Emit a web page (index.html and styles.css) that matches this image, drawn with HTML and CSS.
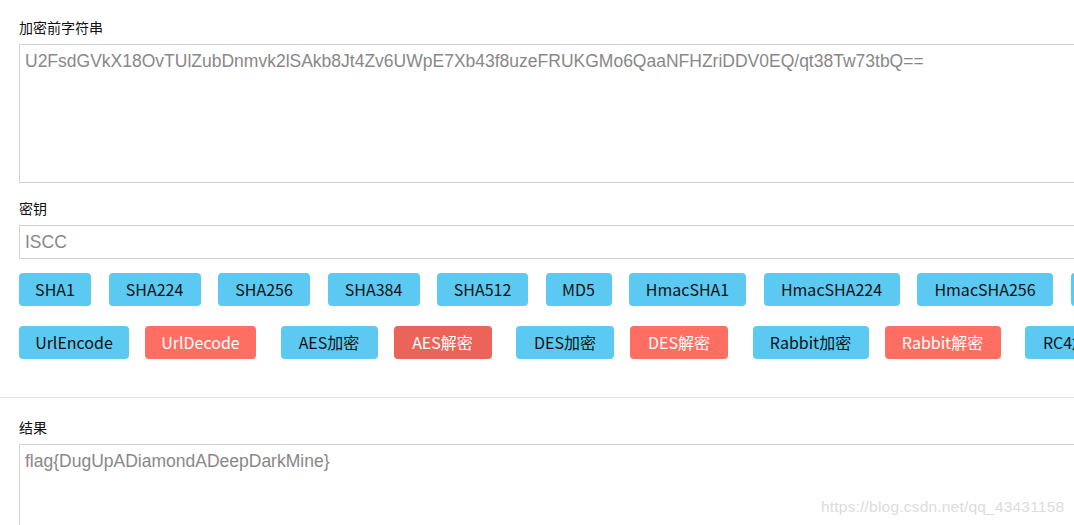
FILE: index.html
```html
<!DOCTYPE html>
<html lang="zh">
<head>
<meta charset="utf-8">
<title>加密解密</title>
<link rel="stylesheet" href="styles.css">
</head>
<body>
<div class="page">
  <section class="top">
    <label class="lbl">加密前字符串</label>
    <textarea class="area area-src">U2FsdGVkX18OvTUlZubDnmvk2lSAkb8Jt4Zv6UWpE7Xb43f8uzeFRUKGMo6QaaNFHZriDDV0EQ/qt38Tw73tbQ==</textarea>
    <label class="lbl lbl-key">密钥</label>
    <input class="key" type="text" value="ISCC">
    <div class="row row-hash">
      <button class="btn w-72">SHA1</button>
      <button class="btn w-92">SHA224</button>
      <button class="btn w-92">SHA256</button>
      <button class="btn w-92">SHA384</button>
      <button class="btn w-91">SHA512</button>
      <button class="btn w-66">MD5</button>
      <button class="btn w-117">HmacSHA1</button>
      <button class="btn w-136">HmacSHA224</button>
      <button class="btn w-136">HmacSHA256</button>
      <button class="btn w-136">HmacSHA384</button>
    </div>
    <div class="row row-cipher">
      <button class="btn w-110">UrlEncode</button>
      <button class="btn btn-red pair-end w-111">UrlDecode</button>
      <button class="btn w-97">AES加密</button>
      <button class="btn btn-red btn-hover pair-end w-98">AES解密</button>
      <button class="btn w-98">DES加密</button>
      <button class="btn btn-red pair-end w-98">DES解密</button>
      <button class="btn w-116">Rabbit加密</button>
      <button class="btn btn-red pair-end w-116">Rabbit解密</button>
      <button class="btn w-97">RC4加密</button>
    </div>
  </section>
  <section class="bottom">
    <label class="lbl">结果</label>
    <textarea class="area area-out">flag{DugUpADiamondADeepDarkMine}</textarea>
  </section>
</div>
<div class="watermark">https://blog.csdn.net/qq_43431158</div>
</body>
</html>
```

FILE: styles.css
```css
html, body {
  margin: 0;
  padding: 0;
  overflow: hidden;
  background: #fff;
  width: 1074px;
  height: 525px;
}

body {
  position: relative;
  font-family: "Noto Sans CJK SC", "Noto Sans", sans-serif;
  color: #111;
}

.page {
  width: 1200px;
}

.top {
  padding: 17px 0 38px 19px;
  border-bottom: 1px solid #e3e3e3;
}

.bottom {
  padding: 19px 0 0 19px;
}

.lbl {
  display: block;
  font-size: 14px;
  line-height: 20px;
  height: 20px;
  margin-bottom: 7px;
  color: #111;
}

.lbl-key {
  margin-top: 15px;
}

.area {
  display: block;
  box-sizing: border-box;
  width: 1150px;
  border: 1px solid #d2d2d2;
  padding: 5px 5px;
  font-family: "Liberation Sans", Arial, sans-serif;
  font-size: 17.5px;
  line-height: 22px;
  color: #888;
  resize: none;
  outline: none;
  background: #fff;
  margin: 0;
}

.area-src {
  height: 139px;
}

.area-out {
  height: 120px;
}

.key {
  display: block;
  box-sizing: border-box;
  width: 1150px;
  height: 34px;
  border: 1px solid #d2d2d2;
  padding: 0 5px;
  font-family: "Liberation Sans", Arial, sans-serif;
  font-size: 17.5px;
  color: #888;
  outline: none;
  margin: 0;
}

.row {
  display: flex;
  flex-wrap: nowrap;
  align-items: center;
}

.row-hash {
  margin-top: 14px;
  gap: 17.5px;
}

.row-cipher {
  margin-top: 20px;
  gap: 16px;
}

.btn {
  flex: none;
  height: 33px;
  padding: 0;
  border: none;
  border-radius: 4px;
  background: #5bc9f2;
  color: #111;
  font-family: "Noto Sans CJK SC", "Noto Sans", sans-serif;
  font-size: 16px;
  line-height: 33px;
  text-align: center;
  white-space: nowrap;
  cursor: pointer;
}

.w-66 { width: 66px; }
.w-72 { width: 72px; }
.w-91 { width: 91px; }
.w-92 { width: 92px; }
.w-97 { width: 97px; }
.w-98 { width: 98px; }
.w-110 { width: 110px; }
.w-111 { width: 111px; }
.w-116 { width: 116px; }
.w-117 { width: 117px; }
.w-136 { width: 136px; }

.btn-red {
  background: #fe6e62;
  color: #fff;
}

.btn-hover {
  background: #ec6459;
}

.pair-end {
  margin-right: 8.5px;
}

.watermark {
  position: absolute;
  left: 821px;
  top: 497px;
  font-family: "Liberation Sans", Arial, sans-serif;
  font-size: 15.5px;
  line-height: 20px;
  color: #dcdcdc;
  letter-spacing: 0.2px;
}
```
